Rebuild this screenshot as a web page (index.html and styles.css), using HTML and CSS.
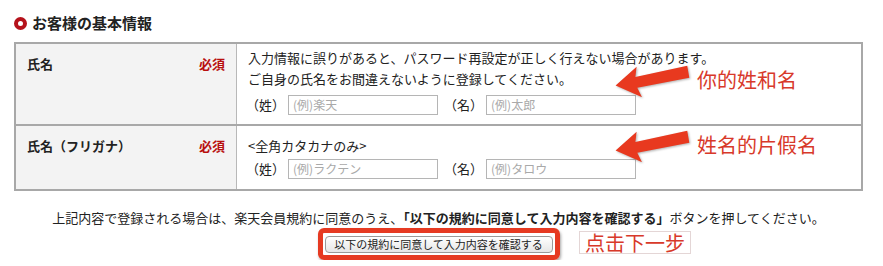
FILE: index.html
```html
<!DOCTYPE html>
<html>
<head>
    <meta charset="utf-8">
    <link rel="stylesheet" href="styles.css">
</head>
<body>
<div class="page">
    <h2 class="section-title"><span class="dot"></span>お客様の基本情報</h2>

    <table class="form-table">
        <tr>
            <th><div class="th-inner"><span>氏名</span><span class="req">必須</span></div></th>
            <td class="cell-name">
                <p class="note">入力情報に誤りがあると、パスワード再設定が正しく行えない場合があります。<br>ご自身の氏名をお間違えないように登録してください。</p>
                <div class="fields">
                    <span class="fld-label">（姓）</span><input type="text" placeholder="(例)楽天">
                    <span class="fld-label">（名）</span><input type="text" placeholder="(例)太郎">
                </div>
            </td>
        </tr>
        <tr>
            <th><div class="th-inner"><span>氏名（フリガナ）</span><span class="req">必須</span></div></th>
            <td class="cell-kana">
                <p class="note">&lt;全角カタカナのみ&gt;</p>
                <div class="fields">
                    <span class="fld-label">（姓）</span><input type="text" placeholder="(例)ラクテン">
                    <span class="fld-label">（名）</span><input type="text" placeholder="(例)タロウ">
                </div>
            </td>
        </tr>
    </table>

    <p class="agree">上記内容で登録される場合は、楽天会員規約に同意のうえ、<b>「以下の規約に同意して入力内容を確認する」</b>ボタンを押してください。</p>

    <div class="submit-row">
        <span class="btn-frame"><button type="button" class="confirmbtn">以下の規約に同意して入力内容を確認する</button></span>
    </div>

    <!-- annotations drawn over the screenshot -->
    <div class="anno anno-1">
        <svg class="arrow" width="80" height="36" viewBox="0 0 80 36">
            <polygon points="2,18 26,3 23,13 76,11 76,23 23,24 26,34" transform="rotate(-10 40 18)"/>
        </svg>
        <span>你的姓和名</span>
    </div>
    <div class="anno anno-2">
        <svg class="arrow" width="80" height="36" viewBox="0 0 80 36">
            <polygon points="2,18 26,3 23,13 76,11 76,23 23,24 26,34" transform="rotate(-10 40 18)"/>
        </svg>
        <span>姓名的片假名</span>
    </div>
    <span class="step-note">点击下一步</span>
</div>
</body>
</html>
```

FILE: styles.css
```css
body {
    margin: 0;
    font-family: "Noto Sans CJK JP", "Noto Sans", sans-serif;
    font-size: 13px;
    color: #222;
    background: #fff;
}

.page {
    position: relative;
    width: 849px;
    padding: 13px 20px 0 14px;
}

.section-title {
    display: flex;
    align-items: center;
    margin: 0 0 9px 0;
    font-size: 15px;
    line-height: 20px;
    font-weight: bold;
    color: #222;
}

.dot {
    width: 5px;
    height: 5px;
    border: 4px solid #b5121b;
    border-radius: 50%;
    margin-right: 5px;
}

.form-table {
    width: 849px;
    border-collapse: collapse;
    border: 2px solid #a8a8a8;
    table-layout: fixed;
}

.form-table tr {
    border-bottom: 2px solid #a8a8a8;
}

.form-table th {
    width: 198px;
    padding: 9px 11px;
    background-color: #f3f3f3;
    border-right: 1px solid #b8b8b8;
    text-align: left;
    vertical-align: top;
    font-size: 13px;
    line-height: 21px;
}

.th-inner {
    display: flex;
    justify-content: space-between;
}

.req {
    color: #b80f0f;
}

.form-table td {
    padding: 3px 11px 9px 11px;
    vertical-align: top;
    line-height: 21px;
}

.form-table td.cell-kana {
    padding-top: 9px;
    padding-bottom: 10px;
}

.note {
    margin: 0;
}

.fields {
    display: flex;
    align-items: center;
    margin-top: 2px;
}

.cell-name .fields {
    margin-top: 5px;
}

.fld-label {
    margin-left: -2px;
}

.fields input {
    width: 150px;
    height: 20px;
    box-sizing: border-box;
    margin: 0 8px 0 3px;
    padding: 0 4px;
    border: 1px solid #b5b5b5;
    font-family: "Noto Sans CJK JP", sans-serif;
    font-size: 12px;
}

.fields input::placeholder {
    color: #a9a9a9;
}

.agree {
    margin: 17px 0 0 0;
    text-align: center;
    line-height: 20px;
}

.submit-row {
    display: flex;
    justify-content: center;
    margin-top: 0;
}

.btn-frame {
    display: inline-block;
    padding: 3px 2px 2px 2px;
    border: 5px solid #e63a22;
    border-radius: 6px;
    box-shadow: 1px 2px 3px rgba(0, 0, 0, 0.35);
}

.confirmbtn {
    display: block;
    width: 228px;
    height: 17px;
    padding: 0;
    border: 1px solid #9a9a9a;
    border-radius: 4px;
    background: linear-gradient(#ffffff, #e6e6e6);
    font-family: "Noto Sans CJK JP", sans-serif;
    font-size: 11px;
    line-height: 15px;
    color: #222;
}

.anno {
    position: absolute;
    display: flex;
    align-items: center;
    color: #d8392a;
    font-family: "Noto Sans CJK SC", sans-serif;
    font-size: 20px;
}

.anno .arrow {
    fill: #e8391f;
    margin-right: 4px;
    filter: drop-shadow(1px 1px 1px rgba(0, 0, 0, 0.3));
}

.anno-1 {
    left: 613px;
    top: 61px;
}

.anno-2 {
    left: 613px;
    top: 126px;
}

.step-note {
    position: absolute;
    left: 579px;
    top: 231px;
    padding: 0 5px;
    border: 1px solid #e4d6d6;
    color: #d8392a;
    font-family: "Noto Sans CJK SC", sans-serif;
    font-size: 20px;
    line-height: 21px;
}
```
